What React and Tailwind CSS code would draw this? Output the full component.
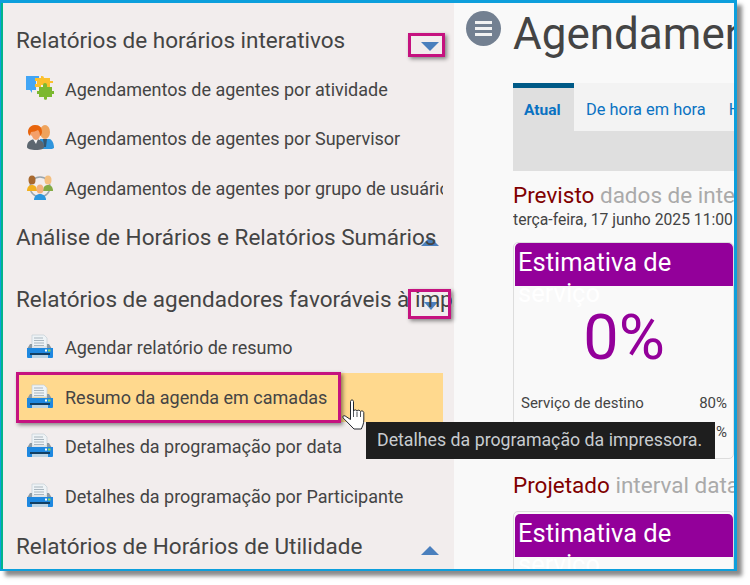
import React from 'react';

const PuzzleIcon = () => (
  <svg width="28" height="27" viewBox="0 0 28 27">
    <path d="M0 1h13v5h-3v9H6v3l-2-3H0z" fill="#42a5f5" />
    <path d="M9 3h6V1h1a2 2 0 0 1 2 2h6v3h3v2h-3v4h-6v-2h-3v2H9V9h2V6H9z" fill="#fbc02d" />
    <path d="M13 12h4v-2a2 2 0 0 1 4 0v2h5v4h2v3h-2v3h-5v2a2 2 0 0 1-3 0v-2h-5v-3h-2v-3h2z" fill="#7cb82f" />
  </svg>
);

const SupervisorIcon = () => (
  <svg width="28" height="27" viewBox="0 0 28 27">
    <ellipse cx="19" cy="8" rx="5" ry="7" fill="#efa35c" />
    <path d="M14 15h10c2 1 4 4 4 9l-2 1H14z" fill="#2f95dd" />
    <path d="M17 15h4l-1 8-2 0z" fill="#36566f" />
    <path d="M1 23c0-5 3-7 7-8h3c4 1 7 3 7 8 0 2-3 3-8 3s-9-1-9-3z" fill="#5d6770" />
    <path d="M7 15h5l-2 5z" fill="#f4f4f4" />
    <path d="M9 1c5 0 7 3 7 7 0 3-2 4-2 4-1 3-3 4-4 4s-3-1-4-4c0 0-2-1-2-4 0-4 2-7 5-7z" fill="#f4a06a" />
    <path d="M9 1c5 0 7 3 7 7 0 2-1 3-2 4 0-3-1-5-2-6-2 1-5 2-7 2l-1 4c-1-1-2-2-2-4 0-4 3-7 7-7z" fill="#e8640c" />
  </svg>
);

const GroupIcon = () => (
  <svg width="28" height="27" viewBox="0 0 28 27">
    <circle cx="14" cy="13" r="10" fill="none" stroke="#9aa5ad" strokeWidth="1.500" />
    <ellipse cx="6" cy="6" rx="3.500" ry="4.500" fill="#a8692f" />
    <path d="M1 17c0-4 2-6 5-6s5 2 5 6z" fill="#f2b01e" />
    <ellipse cx="22" cy="6" rx="3.500" ry="4.500" fill="#f4bf7f" />
    <path d="M17 17c0-4 2-6 5-6s5 2 5 6z" fill="#83ab44" />
    <ellipse cx="14" cy="15" rx="3.500" ry="4.500" fill="#f2b07c" />
    <path d="M8 26c0-4 3-6 6-6s6 2 6 6z" fill="#2b97de" />
  </svg>
);

const PrinterIcon = () => (
  <svg width="28" height="25" viewBox="0 0 28 25">
    <path d="M6 1h12l3 3v9H6z" fill="#eef3f6" stroke="#c3ced6" strokeWidth="0.700" />
    <path d="M8 4h9M8 6.500h10M8 9h10M8 11.500h10" stroke="#a9b6bf" strokeWidth="1" />
    <path d="M4 10h2v4h15v-4h2l3 5H1z" fill="#8d9aa3" />
    <path d="M1 14h26v9a1 1 0 0 1-1 1H2a1 1 0 0 1-1-1z" fill="#1e88e0" />
    <rect x="19" y="15.500" width="2" height="2" fill="#ffffff" />
    <rect x="22" y="15.500" width="2.500" height="2" fill="#8ddc5a" />
    <rect x="4" y="19" width="20" height="2" fill="#123f63" />
    <rect x="6" y="21" width="16" height="3" fill="#b9d3e4" />
  </svg>
);

const HandCursor = () => (
  <svg width="26" height="32" viewBox="0 0 26 32">
    <path
      d="M8.500 2.500c0-2 3-2 3 0v9.500c.5-1.500 3-1.500 3.500 0 .5-1.300 3-1 3.500.5.7-1 3-.7 3.300 1v7.500c0 4-1.500 6.500-2.500 9H12L1.200 19c-1.200-1.500.5-3 2-2l5.300 3.500z"
      fill="#ffffff"
      stroke="#22272e"
      strokeWidth="1"
      strokeLinejoin="round"
    />
    <path d="M11.500 12v6M15 12.500v5.500M18.500 13v5" stroke="#22272e" strokeWidth="0.800" />
  </svg>
);

const SectionTitle = ({ children, arrow, shift = 'top-[1px]' }) => (
  <div className="relative h-[49.500px] flex items-center pl-[13px] overflow-hidden">
    {arrow}
    <h2 className={'relative text-[22.500px] text-[#444444] whitespace-nowrap ' + shift}>{children}</h2>
  </div>
);

const ReportItem = ({ icon, children, active }) => (
  <div
    className={
      'h-[49.500px] flex items-center gap-[11px] pl-[9px] ml-[13px] mr-[11px] overflow-hidden ' +
      (active ? 'bg-[#ffd98e]' : '')
    }
  >
    <span className="w-[29px] shrink-0 flex justify-center relative bottom-[1px]">{icon}</span>
    <span className="text-[18px] text-[#444444] whitespace-nowrap">{children}</span>
  </div>
);

const Callout = ({ className }) => (
  <div className={'absolute border-[3px] border-[#c5127f] shadow-[2px_2px_4px_rgba(0,0,0,0.45)] ' + className} />
);

const ServiceCard = ({ clip }) => (
  <div
    className={
      'border border-[#dddddd] rounded-[5px] pl-px ' +
      (clip ? 'h-[70px] pt-[2px] overflow-hidden' : 'h-[217px]')
    }
  >
    <div className="h-[43px] bg-[#93009a] rounded-t-[5px] px-[3px] pt-[4px] text-[25.500px] leading-[31px] text-white">
      Estimativa de serviço
    </div>
    {!clip && (
      <>
        <div className="text-center text-[63px] leading-[74px] text-[#93009a] mt-[15px]">0%</div>
        <div className="flex justify-between text-[15px] leading-[18px] text-[#444444] pl-[6px] pr-[6px] mt-[19px]">
          <span>Serviço de destino</span>
          <span>80%</span>
        </div>
        <div className="flex justify-end text-[15px] leading-[18px] text-[#444444] pr-[6px] mt-[11px]">
          <span>%</span>
        </div>
      </>
    )}
  </div>
);

export default function App() {
  return (
    <div className="w-[750px] h-[585px] bg-white overflow-hidden font-['Roboto',sans-serif]">
      <div className="relative w-[737px] h-[571px] flex border-t-[3px] border-b-[2px] border-r-[3px] border-l border-[#0d9fdc] shadow-[5px_5px_4px_rgba(60,60,60,0.6)] overflow-hidden">
        <aside className="w-[453px] shrink-0 bg-[#f2eded] border-l-2 border-[#00b58c] pt-[12px] overflow-hidden">
          <SectionTitle
            arrow={<span className="absolute right-[15px] bottom-[14px] w-0 h-0 border-x-[9px] border-x-transparent border-t-[9px] border-t-[#4a7fbd]" />}
          >
            Relatórios de horários interativos
          </SectionTitle>
          <ReportItem icon={<PuzzleIcon />}>Agendamentos de agentes por atividade</ReportItem>
          <ReportItem icon={<SupervisorIcon />}>Agendamentos de agentes por Supervisor</ReportItem>
          <ReportItem icon={<GroupIcon />}>Agendamentos de agentes por grupo de usuário</ReportItem>
          <SectionTitle
            shift="top-0"
            arrow={<span className="absolute right-[15px] bottom-[17px] w-0 h-0 border-x-[9px] border-x-transparent border-b-[9px] border-b-[#4a7fbd]" />}
          >
            Análise de Horários e Relatórios Sumários
          </SectionTitle>
          <div className="mt-[11px]">
            <SectionTitle
              shift="top-[2px]"
              arrow={<span className="absolute right-[16px] bottom-[13px] w-0 h-0 border-x-[7px] border-x-transparent border-t-[8px] border-t-[#4a7fbd]" />}
            >
              Relatórios de agendadores favoráveis à impressora
            </SectionTitle>
          </div>
          <ReportItem icon={<PrinterIcon />}>Agendar relatório de resumo</ReportItem>
          <ReportItem icon={<PrinterIcon />} active>Resumo da agenda em camadas</ReportItem>
          <ReportItem icon={<PrinterIcon />}>Detalhes da programação por data</ReportItem>
          <ReportItem icon={<PrinterIcon />}>Detalhes da programação por Participante</ReportItem>
          <SectionTitle
            arrow={<span className="absolute right-[15px] bottom-[16px] w-0 h-0 border-x-[9px] border-x-transparent border-b-[9px] border-b-[#4a7fbd]" />}
          >
            Relatórios de Horários de Utilidade
          </SectionTitle>
        </aside>

        <main className="flex-1 min-w-0 bg-[#f9f9f9] flex overflow-hidden">
          <div className="w-[59px] shrink-0 pt-[8px] pl-[12px]">
            <div className="w-[35px] h-[35px] rounded-full bg-[#738091] flex flex-col items-center justify-center gap-[3px]">
              <span className="w-[17px] h-[3px] bg-[#f2f2f2]" />
              <span className="w-[17px] h-[3px] bg-[#f2f2f2]" />
              <span className="w-[17px] h-[3px] bg-[#f2f2f2]" />
            </div>
          </div>

          <div className="w-[221px] shrink-0 overflow-hidden">
            <h1 className="text-[44px] leading-[56px] text-[#444444] whitespace-nowrap mt-[3px]">Agendamentos</h1>
            <div className="mt-[21px] h-[88px] w-[221px] bg-[#dfdfdf] overflow-hidden">
              <div className="h-[48px] bg-[#f3f3f3] flex whitespace-nowrap text-[16.400px] leading-[20px] text-[#0a72c2]">
                <span className="w-[61px] shrink-0 bg-[#dfdfdf] border-t-[5px] border-[#005a87] pl-[11px] pt-[12px] font-bold text-[15.500px]">Atual</span>
                <span className="pl-[12px] pt-[17px]">De hora em hora</span>
                <span className="pl-[23px] pt-[17px]">Hora</span>
              </div>
            </div>
            <div className="mt-[10px] text-[22.500px] leading-[28px] whitespace-nowrap text-[#aaaaaa]">
              <span className="text-[#800000]">Previsto</span> dados de intervalo
            </div>
            <div className="text-[15.700px] leading-[22px] text-[#444444] whitespace-nowrap">terça-feira, 17 junho 2025 11:00</div>
            <div className="mt-[11px]"><ServiceCard /></div>
            <div className="mt-[12px] text-[22.500px] leading-[28px] whitespace-nowrap text-[#aaaaaa]">
              <span className="text-[#800000]">Projetado</span> interval data
            </div>
            <div className="mt-[12px]"><ServiceCard clip /></div>
          </div>
        </main>

        <Callout className="left-[407px] top-[30px] w-[37px] h-[24px]" />
        <Callout className="left-[407px] top-[286px] w-[43px] h-[30px]" />
        <Callout className="left-[15px] top-[369px] w-[325px] h-[51px]" />

        <div className="absolute left-[365px] top-[419px] w-[349px] h-[37px] bg-[#1e1e1e] flex items-center pl-[11px] text-[17.750px] text-[#c8ccd0] whitespace-nowrap">
          Detalhes da programação da impressora.
        </div>
        <span className="absolute left-[341px] top-[396px] flex"><HandCursor /></span>
      </div>
    </div>
  );
}
